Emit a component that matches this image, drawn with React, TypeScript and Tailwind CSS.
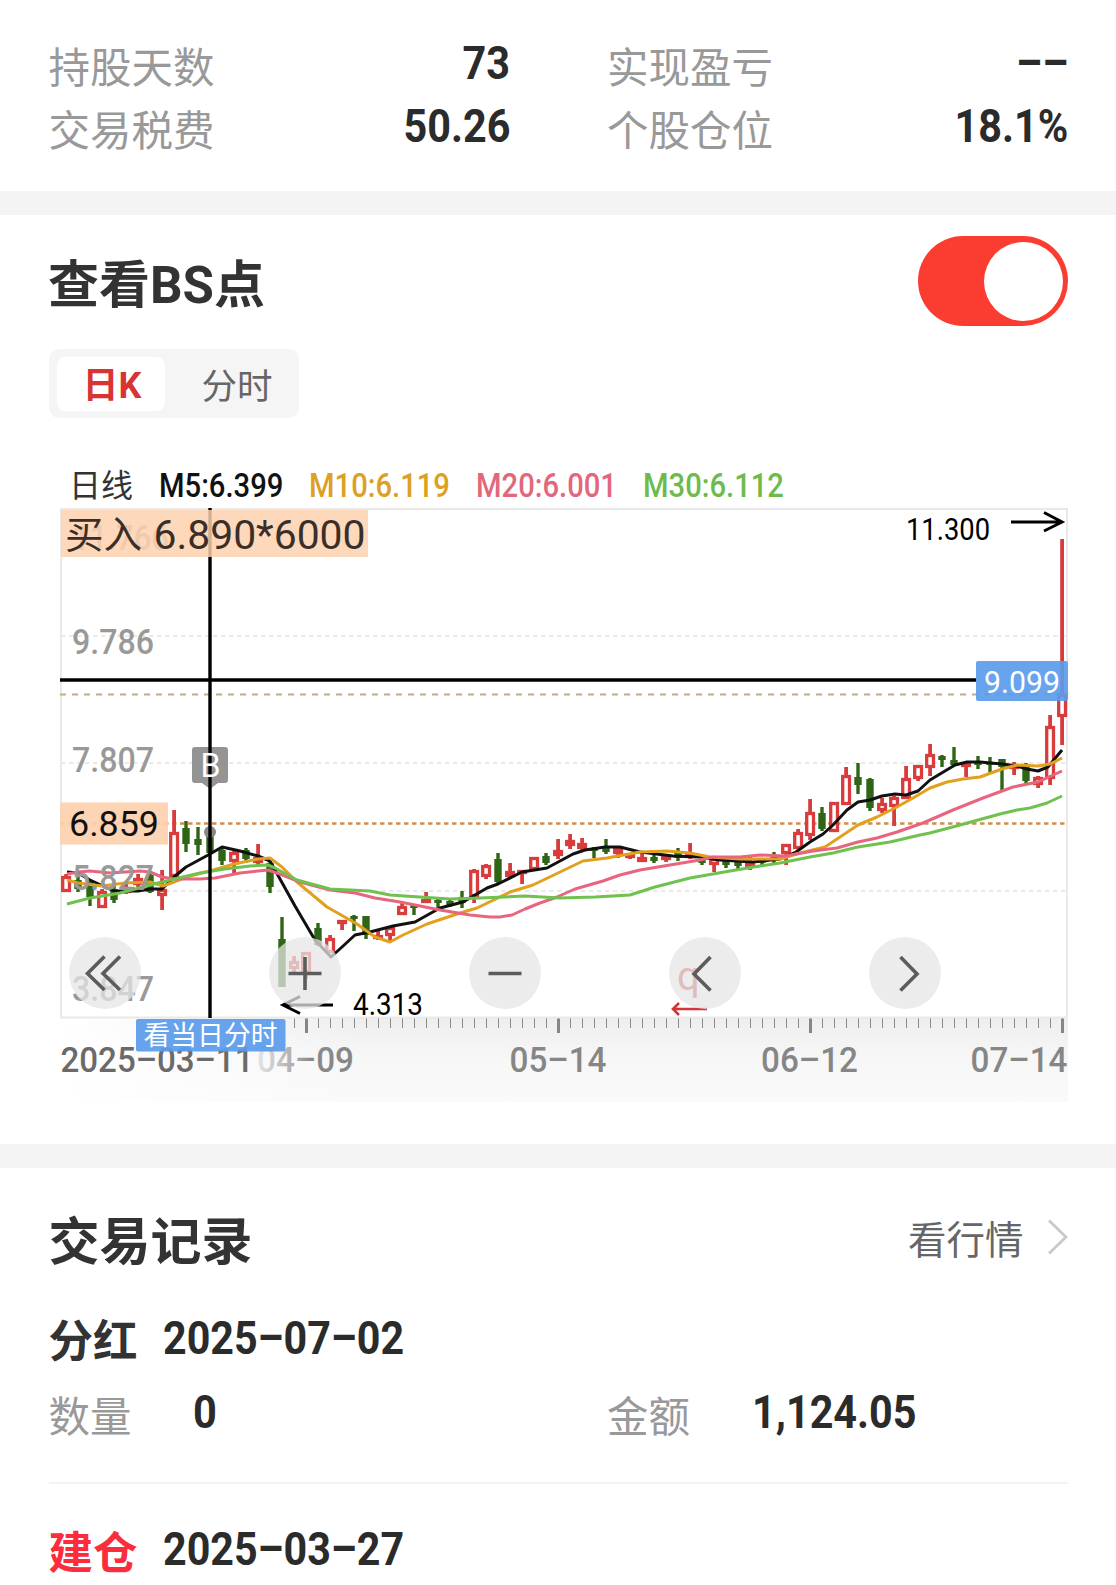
type Candle = [kind: 'R' | 'G', high: number, top: number, bottom: number, low: number];

const STEP = 12;
const FIRST_X = 66;

// R = up day (hollow), G = down day (filled); values are y positions on the chart
const candles: Candle[] = [
  ['R', 874, 876, 892, 892], ['G', 875, 880, 889, 892], ['G', 880, 882, 897, 906], ['R', 889, 891, 908, 908],
  ['G', 886, 889, 900, 903], ['R', 883, 887, 893, 894], ['R', 874, 878, 885, 887], ['G', 872, 875, 892, 893],
  ['R', 870, 889, 896, 910], ['R', 810, 832, 877, 877], ['G', 821, 828, 844, 852], ['G', 827, 839, 845, 855],
  ['G', 830, 835, 853, 853], ['G', 848, 850, 861, 865], ['R', 851, 852, 862, 873], ['G', 848, 850, 859, 863],
  ['R', 844, 857, 863, 865], ['G', 861, 863, 887, 893], ['G', 917, 939, 987, 987], ['R', 956, 961, 969, 972],
  ['R', 952, 952, 973, 979], ['G', 923, 928, 945, 946], ['R', 935, 938, 953, 953], ['R', 920, 920, 924, 930],
  ['G', 915, 916, 919, 931], ['G', 916, 916, 935, 939], ['R', 931, 935, 939, 940], ['R', 926, 927, 936, 942],
  ['R', 902, 906, 915, 915], ['G', 905, 905, 908, 915], ['R', 892, 899, 903, 903], ['G', 899, 900, 903, 908],
  ['G', 899, 901, 905, 907], ['G', 891, 897, 903, 908], ['R', 869, 870, 897, 903], ['R', 864, 865, 877, 879],
  ['G', 853, 859, 882, 884], ['R', 863, 871, 877, 878], ['R', 870, 870, 874, 884], ['R', 857, 857, 870, 871],
  ['G', 853, 856, 863, 865], ['R', 839, 850, 856, 859], ['R', 834, 840, 846, 849], ['R', 838, 843, 849, 850],
  ['G', 847, 848, 851, 858], ['G', 839, 847, 852, 854], ['R', 848, 848, 854, 858], ['R', 853, 854, 857, 859],
  ['R', 853, 857, 862, 862], ['G', 854, 857, 861, 863], ['R', 854, 856, 859, 862], ['G', 848, 853, 858, 861],
  ['R', 843, 854, 858, 859], ['G', 858, 859, 863, 865], ['R', 858, 858, 865, 872], ['G', 859, 861, 865, 868],
  ['G', 859, 861, 866, 869], ['R', 855, 862, 867, 870], ['G', 860, 860, 863, 866], ['G', 852, 857, 860, 863],
  ['R', 844, 844, 854, 865], ['R', 829, 832, 849, 849], ['R', 799, 812, 836, 840], ['G', 807, 813, 829, 831],
  ['R', 802, 802, 832, 832], ['R', 767, 775, 805, 805], ['G', 763, 777, 785, 794], ['G', 778, 779, 808, 811],
  ['R', 798, 803, 811, 813], ['R', 796, 797, 807, 826], ['R', 766, 778, 799, 799], ['R', 765, 765, 779, 781],
  ['R', 744, 754, 768, 776], ['G', 755, 756, 760, 767], ['G', 747, 760, 765, 765], ['R', 763, 763, 767, 777],
  ['G', 756, 762, 765, 769], ['G', 757, 762, 765, 773], ['G', 759, 759, 767, 790], ['R', 762, 765, 769, 775],
  ['G', 763, 764, 781, 783], ['R', 776, 777, 785, 788], ['R', 715, 726, 779, 785], ['R', 539, 694, 717, 745],
];

const averages = [
  {
    color: '#111111',
    points:
      '67,872 78,873 90,880 114,891 138,891 150,889 162,889 174,877 186,867 210,854 222,847 240,851 258,856 270,861 275,870 295,906 315,940 331,957 342,947 355,935 370,932 393,926 415,922 440,908 463,902 487,888 498,884 522,872 547,868 560,861 573,854 585,850 605,847 620,847 640,852 673,856 700,857 720,860 753,862 780,859 796,852 810,842 823,834 833,825 847,810 858,802 870,800 882,796 895,794 906,795 918,791 930,780 955,765 967,762 980,762 1002,764 1017,766 1027,769 1038,771 1048,767 1062,750',
  },
  {
    color: '#e2a01f',
    points:
      '67,880 78,883 102,886 125,883 150,882 163,886 174,882 186,877 210,871 234,864 258,859 270,858 282,867 297,882 327,907 357,924 375,937 390,942 403,935 427,924 460,913 477,908 510,892 533,885 558,873 583,861 607,858 640,852 667,851 690,853 710,857 740,859 780,859 800,853 825,847 840,837 858,825 877,817 895,808 913,798 930,788 947,782 963,779 980,777 1002,769 1017,765 1038,766 1050,764 1062,758',
  },
  {
    color: '#e8657e',
    points:
      '67,874 78,872 90,871 110,873 140,871 150,872 162,877 174,879 200,879 215,878 240,873 258,871 268,870 280,874 300,882 330,890 355,893 375,898 400,902 440,910 470,915 490,917 500,917 512,915 525,909 540,903 557,897 575,889 603,881 620,875 640,870 670,865 700,860 712,857 740,857 760,855 785,856 813,851 837,848 858,842 877,838 897,832 923,823 953,810 983,798 1013,787 1038,782 1062,771',
  },
  {
    color: '#70c14f',
    points:
      '67,904 90,898 120,893 150,885 170,880 200,873 225,869 250,866 268,865 275,868 297,880 330,889 370,891 390,895 420,897 450,899 480,898 525,896 560,898 595,897 630,895 655,887 690,878 730,871 760,866 780,863 810,857 833,853 858,847 890,842 920,835 930,833 960,825 1000,814 1017,810 1030,808 1047,803 1062,796',
  },
];

const legend = [
  { label: 'M5:6.399', cls: 'text-[#111] w-[150px]' },
  { label: 'M10:6.119', cls: 'text-[#dca024] w-[167px]' },
  { label: 'M20:6.001', cls: 'text-[#e2677c] w-[167px]' },
  { label: 'M30:6.112', cls: 'text-[#6cbb4c] w-[150px]' },
];

const controls = [
  { name: 'first', d: 'M35.5 19.5 L18.5 36.5 L35.5 53 M51 19.5 L34 36.5 L51 53' },
  { name: 'zoom-in', d: 'M19.5 36.5 H52.5 M36 20 V53' },
  { name: 'zoom-out', d: 'M19.5 36.5 H52.5' },
  { name: 'prev', d: 'M41.5 20 L25 37 L41.5 53.5' },
  { name: 'next', d: 'M31.5 20 L48 37 L31.5 53.5' },
];

function Label({ x, y, w, size, fill, children, weight = 400 }: any) {
  return (
    <text x={x} y={y} textLength={w} lengthAdjust="spacingAndGlyphs" fontSize={size} fill={fill} fontWeight={weight}>
      {children}
    </text>
  );
}

function CandleBar({ data, x }: { data: Candle; x: number }) {
  const [kind, high, top, bottom, low] = data;
  if (kind === 'G') {
    return (
      <g fill="#2f6516">
        <rect x={x - 1.7} y={high} width="3.4" height={low - high} />
        <rect x={x - 3.7} y={top} width="7.4" height={bottom - top} />
      </g>
    );
  }
  return (
    <g>
      <rect x={x - 1.8} y={high} width="3.8" height={Math.max(0, top - high)} fill="#d83c3c" />
      <rect x={x - 1.8} y={bottom} width="3.8" height={Math.max(0, low - bottom)} fill="#d83c3c" />
      <rect x={x - 3.3} y={top + 1.5} width="6.8" height={Math.max(1, bottom - top - 3)} fill="#fff" stroke="#d83c3c" strokeWidth="3.3" />
    </g>
  );
}

function KLineChart() {
  return (
    <svg viewBox="0 504 1116 602" width="1116" height="602" className="block">
      <defs>
        <linearGradient id="axisShade" x1="0" y1="0" x2="0" y2="1">
          <stop offset="0" stopColor="#eeeeee" />
          <stop offset="0.5" stopColor="#f7f7f7" />
          <stop offset="1" stopColor="#fafafa" />
        </linearGradient>
        <linearGradient id="axisFade" x1="0" y1="0" x2="1" y2="0">
          <stop offset="0" stopColor="#fff" />
          <stop offset="1" stopColor="#fff" stopOpacity="0" />
        </linearGradient>
        <linearGradient id="dateFade" gradientUnits="userSpaceOnUse" x1="258" y1="0" x2="354" y2="0">
          <stop offset="0" stopColor="#e4e4e4" />
          <stop offset="0.35" stopColor="#b0b0b0" />
          <stop offset="0.55" stopColor="#8a8a8a" />
          <stop offset="1" stopColor="#868686" />
        </linearGradient>
      </defs>

      {/* date axis */}
      <rect x="61" y="1018" width="1007" height="84" fill="url(#axisShade)" />
      <rect x="61" y="1018" width="300" height="84" fill="url(#axisFade)" />
      {Array.from({ length: 65 }, (_, i) => {
        const x = 294 + i * STEP;
        const major = (x - 306) % 252 === 0;
        return <rect key={x} x={major ? x - 1 : x} y="1018" width={major ? 3 : 1} height={major ? 15 : 10} fill={major ? '#868686' : '#8a8a8a'} />;
      })}

      {/* grid */}
      <rect x="61" y="509" width="1006" height="508.5" fill="none" stroke="#e9e9e9" strokeWidth="2" />
      {[636, 763, 891].map((y) => (
        <line key={y} x1="61" x2="1066" y1={y} y2={y} stroke="#e4e4e4" strokeWidth="1.6" strokeDasharray="4.5 3.5" />
      ))}
      <line x1="60" x2="1066" y1="694.5" y2="694.5" stroke="#bfae82" strokeWidth="2" strokeDasharray="6 6" />
      <line x1="60" x2="1066" y1="823.5" y2="823.5" stroke="#cf8f50" strokeWidth="2.4" strokeDasharray="4.5 3.5" />

      {candles.map((c, i) => (
        <CandleBar key={i} data={c} x={FIRST_X + i * STEP} />
      ))}
      {averages.map((a) => (
        <polyline key={a.color} points={a.points} fill="none" stroke={a.color} strokeWidth="3" strokeLinejoin="round" />
      ))}

      {/* price axis */}
      <Label x="72" y="550" w="97" size="35" fill="#aaa" weight={500}>11.766</Label>
      <Label x="72" y="653.5" w="82" size="35" fill="#999" weight={500}>9.786</Label>
      <Label x="72" y="771.5" w="82" size="35" fill="#999" weight={500}>7.807</Label>
      <Label x="72" y="890" w="82" size="35" fill="#999" weight={500}>5.827</Label>
      <Label x="72" y="1000.5" w="82" size="35" fill="#999" weight={500}>3.847</Label>

      {/* buy marker */}
      <path d="M195 747 H225 a3 3 0 0 1 3 3 V780 a3 3 0 0 1 -3 3 H218 L210 789 L202 783 H195 a3 3 0 0 1 -3 -3 V750 a3 3 0 0 1 3 -3 Z" fill="#949494" />
      <circle cx="210" cy="832" r="6" fill="#888" />
      <line x1="210" x2="210" y1="508" y2="1018" stroke="#000" strokeWidth="3.4" />
      <line x1="60" x2="976" y1="680" y2="680" stroke="#000" strokeWidth="3.4" />
      <Label x="200.5" y="777" w="20" size="33" fill="#fff">B</Label>

      <rect x="61" y="510" width="307" height="47" fill="#fdd0ae" fillOpacity="0.84" />
      <Label x="65" y="548" w="77" size="38" fill="#3a2f28">买入</Label>
      <Label x="153.5" y="548.5" w="212" size="40" fill="#3a2f28">6.890*6000</Label>

      <rect x="60" y="802.5" width="108" height="42" fill="#fdd0ae" fillOpacity="0.92" />
      <Label x="69" y="836" w="90" size="35" fill="#111">6.859</Label>

      {/* high / low */}
      <Label x="906" y="540" w="84" size="31" fill="#000">11.300</Label>
      <path d="M1011 522 H1062 M1044 512.5 L1062 522 L1044 531" fill="none" stroke="#000" strokeWidth="3" />
      <Label x="353" y="1015" w="70" size="31" fill="#000">4.313</Label>
      <path d="M333 1005 H283 M300 996.5 L283 1005 L300 1013.5" fill="none" stroke="#000" strokeWidth="3" />
      <text x="677" y="990" fontSize="40" fill="#d83c3c">q</text>
      <path d="M707 1009 H673 M679 1003 L673 1009 L679 1015" fill="none" stroke="#d2343a" strokeWidth="2.6" />

      <rect x="976" y="661" width="92" height="40" rx="2" fill="#5b9bec" fillOpacity="0.92" />
      <Label x="984" y="692.5" w="76" size="32" fill="#fff">9.099</Label>

      {/* dates */}
      <Label x="60.5" y="1071.5" w="193" size="35" fill="#6a6a6a" weight={500}>2025–03–11</Label>
      <Label x="257" y="1071.5" w="97" size="35" fill="url(#dateFade)" weight={500}>04–09</Label>
      <Label x="509.5" y="1071.5" w="97" size="35" fill="#868686" weight={500}>05–14</Label>
      <Label x="761" y="1071.5" w="97" size="35" fill="#868686" weight={500}>06–12</Label>
      <Label x="970.5" y="1071.5" w="97" size="35" fill="#868686" weight={500}>07–14</Label>

      <rect x="136" y="1019" width="149.5" height="32.5" rx="2" fill="#5b9bec" fillOpacity="0.93" />
      <Label x="143.5" y="1045" w="134" size="27" fill="#fff">看当日分时</Label>
    </svg>
  );
}

function Stat({ label, value }: { label: string; value: string }) {
  return (
    <div className="flex h-[63px] items-center justify-between">
      <span className="pt-3 text-[41.5px] leading-none text-[#999]">{label}</span>
      <span className="origin-right translate-x-px scale-x-[.88] text-[47px] leading-none font-bold text-[#2b2b2b]">{value}</span>
    </div>
  );
}

function RecordTitle({ kind, date, cls }: { kind: string; date: string; cls: string }) {
  return (
    <div className="flex items-center">
      <span className={`w-[114px] pt-2.5 text-[44.5px] leading-none font-bold ${cls}`}>{kind}</span>
      <span className="origin-left scale-x-[.877] text-[47px] leading-none font-bold text-[#2b2b2b]">{date}</span>
    </div>
  );
}

export default function App() {
  return (
    <div className="h-[1585px] w-[1116px] overflow-hidden bg-white font-['Roboto','Noto_Sans_CJK_SC',sans-serif]">
      <section className="grid h-[191px] grid-cols-2 content-start gap-x-[98px] px-[48.5px] pt-[31px]">
        <Stat label="持股天数" value="73" />
        <Stat label="实现盈亏" value="––" />
        <Stat label="交易税费" value="50.26" />
        <Stat label="个股仓位" value="18.1%" />
      </section>

      <div className="h-6 bg-[#f4f4f4]" />

      <section className="h-[929px] pt-[21px]">
        <div className="flex h-[90px] items-center justify-between px-[48px]">
          <h2 className="pt-2 text-[51px] leading-none font-bold text-[#333]">查看BS点</h2>
          <div className="flex h-[90px] w-[150px] items-center justify-end rounded-full bg-[#fb3c30] pr-[5px]">
            <div className="size-[79px] rounded-full bg-white" />
          </div>
        </div>

        <div className="mt-[23px] ml-[49px] flex h-[69px] w-[250px] items-center rounded-[10px] bg-[#f5f5f5] px-2">
          <div className="flex h-[54px] w-[108px] items-center justify-center rounded-lg bg-white pt-1 pl-0.5 text-[36px] leading-none font-bold text-[#d93434]">
            日K
          </div>
          <div className="flex-1 pt-2 pl-[18px] text-center text-[35.5px] leading-none text-[#666]">分时</div>
        </div>

        <div className="mt-[48px] flex h-[38px] items-center pl-[69px] text-[33px] leading-none font-medium">
          <span className="w-[90px] pt-0.5 text-[32px] font-normal text-[#333]">日线</span>
          {legend.map((m) => (
            <span key={m.label} className={`origin-left scale-x-[.885] ${m.cls}`}>{m.label}</span>
          ))}
        </div>

        <div className="relative">
          <KLineChart />
          <div className="absolute top-[433px] left-[69px] flex gap-32">
            {controls.map((c) => (
              <button key={c.name} aria-label={c.name} className="size-[72px] rounded-full bg-[#e6e6e6]/75">
                <svg viewBox="0 0 72 72" className="size-[72px]" fill="none" stroke="#5c5c5c" strokeWidth="3.6">
                  <path d={c.d} />
                </svg>
              </button>
            ))}
          </div>
        </div>
      </section>

      <div className="h-6 bg-[#f4f4f4]" />

      <section className="px-[48.5px] pt-[42px]">
        <div className="flex h-[60px] items-center justify-between">
          <h2 className="pt-1 text-[51px] leading-none font-bold text-[#333]">交易记录</h2>
          <div className="flex items-center text-[38.5px] leading-none text-[#666]">
            <span className="pt-0.5">看行情</span>
            <svg viewBox="0 0 20 36" className="mb-1.5 ml-[24px] h-9 w-5" fill="none" stroke="#c9c9c9" strokeWidth="2.8">
              <path d="M1 1.5 L18 18 L1 34.5" />
            </svg>
          </div>
        </div>

        <div className="mt-[40px]">
          <RecordTitle kind="分红" date="2025–07–02" cls="text-[#333]" />
        </div>
        <div className="mt-[20px] grid h-[50px] grid-cols-2 items-center gap-x-[98px]">
          <div className="flex items-center">
            <span className="w-[144px] pt-3 text-[41.5px] leading-none text-[#999]">数量</span>
            <span className="origin-left scale-x-[.885] text-[47px] leading-none font-bold text-[#2b2b2b]">0</span>
          </div>
          <div className="flex items-center">
            <span className="w-[145px] pt-3 text-[41.5px] leading-none text-[#999]">金额</span>
            <span className="origin-left scale-x-[.88] text-[47px] leading-none font-bold text-[#2b2b2b]">1,124.05</span>
          </div>
        </div>

        <div className="mt-[47px] h-0.5 bg-[#f3f3f3]" />
        <div className="mt-[38px]">
          <RecordTitle kind="建仓" date="2025–03–27" cls="text-[#fb2c3c]" />
        </div>
      </section>
    </div>
  );
}
